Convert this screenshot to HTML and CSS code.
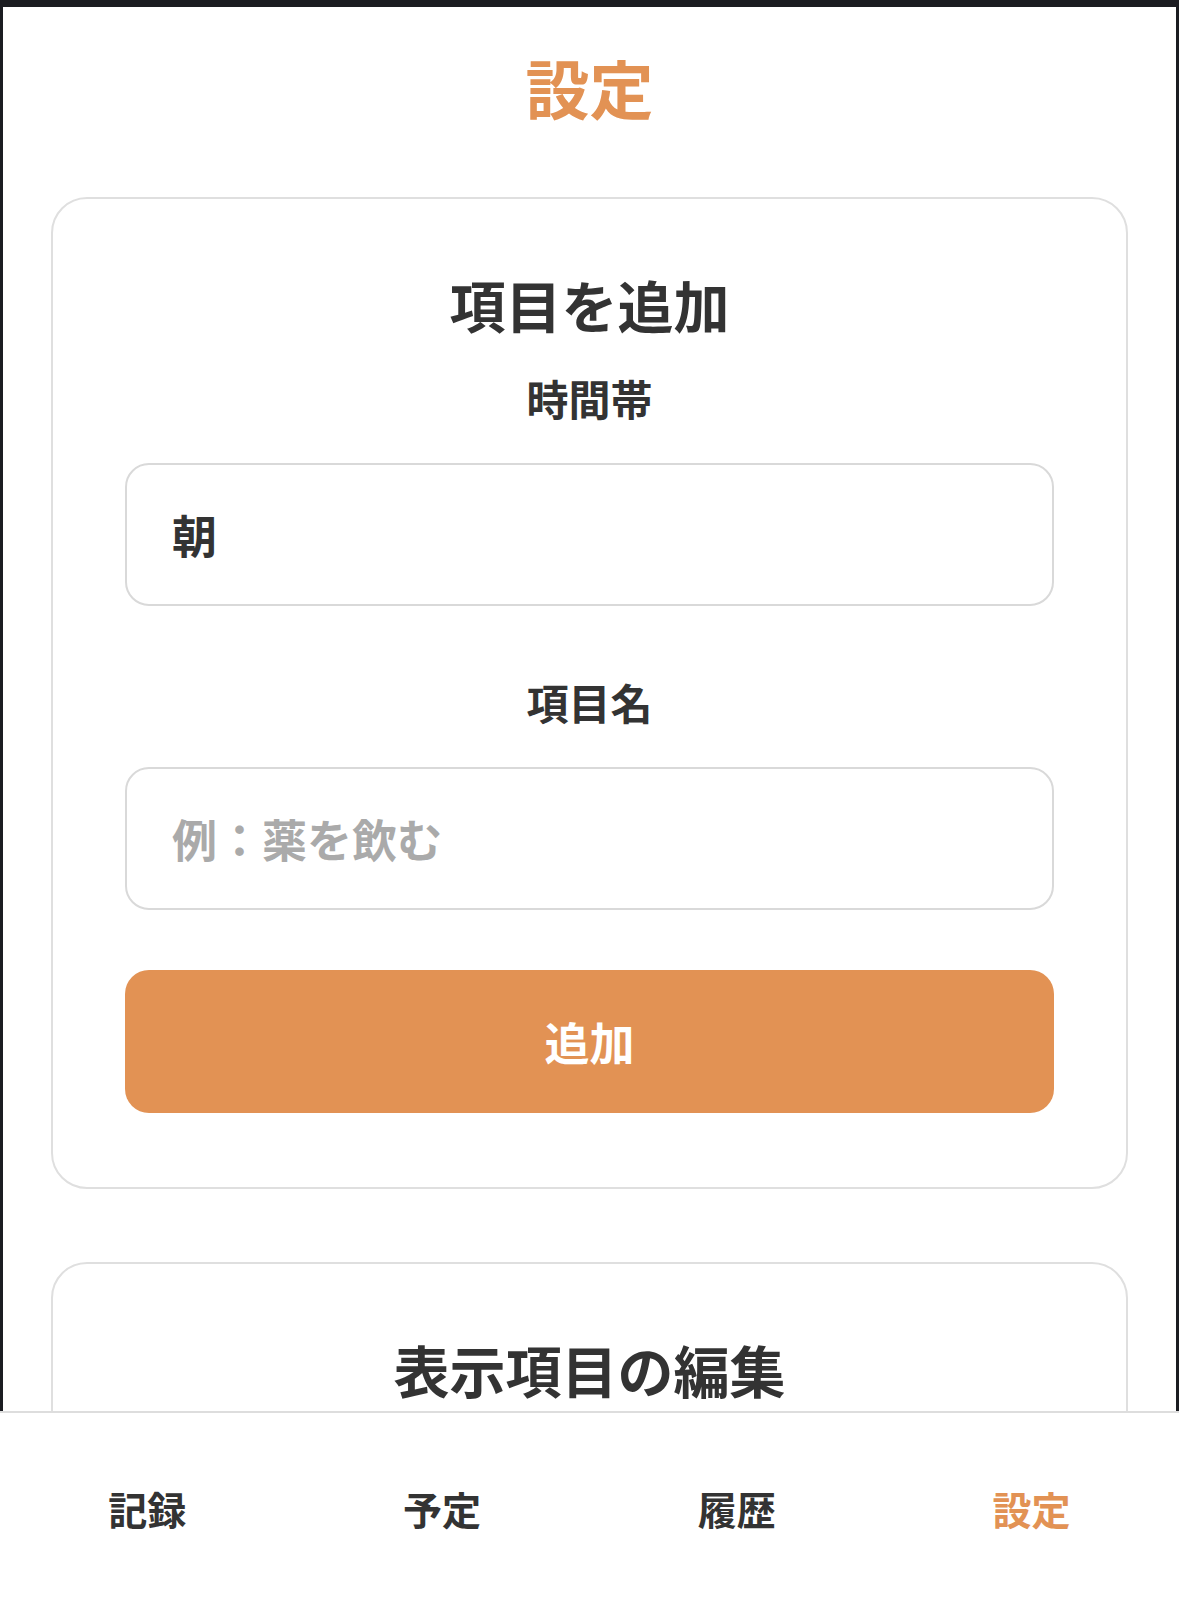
FILE: index.html
```html
<!DOCTYPE html>
<html lang="ja">
<head>
<meta charset="utf-8">
<title>設定</title>
<link rel="stylesheet" href="styles.css">
</head>
<body>
<div class="app">
  <h1 class="page-title">設定</h1>

  <section class="card">
    <h2 class="card-title">項目を追加</h2>
    <div class="field-group">
      <label class="field-label" for="slot">時間帯</label>
      <input class="field" id="slot" type="text" value="朝" readonly>
    </div>
    <div class="field-group">
      <label class="field-label" for="name">項目名</label>
      <input class="field" id="name" type="text" placeholder="例：薬を飲む">
    </div>
    <button class="add-button" type="button">追加</button>
  </section>

  <section class="card card-second">
    <h2 class="card-title">表示項目の編集</h2>
  </section>
</div>

<nav class="tabbar">
  <a class="tab">記録</a>
  <a class="tab">予定</a>
  <a class="tab">履歴</a>
  <a class="tab tab-active">設定</a>
</nav>
</body>
</html>
```

FILE: styles.css
```css
* {
  box-sizing: border-box;
}

html, body {
  margin: 0;
  padding: 0;
}

body {
  background: #1b1c21;
  font-family: "Noto Sans CJK JP", "Noto Sans", sans-serif;
  color: #333333;
  overflow: hidden;
  height: 100vh;
}

.app {
  margin: 7px 3px 0;
  background: #ffffff;
  height: calc(100vh - 7px);
  overflow: hidden;
  padding-top: 41px;
}

.page-title {
  margin: 0;
  text-align: center;
  font-size: 64px;
  line-height: 77px;
  font-weight: 700;
  color: #e29254;
}

.card {
  margin: 72px 48px 0;
  border: 2px solid #dfdfdf;
  border-radius: 36px;
  padding: 69px 72px 74px;
  background: #ffffff;
}

.card-second {
  margin-top: 73px;
  min-height: 300px;
}

.card-title {
  margin: 0 0 26px;
  text-align: center;
  font-size: 56px;
  line-height: 72px;
  font-weight: 700;
  color: #333333;
}

.field-group {
  display: flex;
  flex-direction: column;
  margin-bottom: 64px;
}

.field-group + .field-group {
  margin-bottom: 60px;
}

.field-label {
  display: block;
  text-align: center;
  font-size: 42px;
  line-height: 63px;
  font-weight: 700;
  margin-bottom: 34px;
  color: #333333;
}

.field {
  display: block;
  width: 100%;
  height: 143px;
  border: 2px solid #d9d9d9;
  border-radius: 24px;
  padding: 0 45px;
  font-family: inherit;
  font-size: 45px;
  font-weight: 700;
  color: #333333;
  background: #ffffff;
  outline: none;
}

.field::placeholder {
  color: #aaaaaa;
  font-weight: 700;
  opacity: 1;
}

.add-button {
  display: block;
  width: 100%;
  height: 143px;
  border: none;
  border-radius: 24px;
  background: #e29254;
  color: #ffffff;
  font-family: inherit;
  font-size: 45px;
  font-weight: 700;
  cursor: pointer;
}

.tabbar {
  position: fixed;
  left: 0;
  right: 0;
  bottom: 0;
  height: 195px;
  background: #ffffff;
  border-top: 2px solid #dddddd;
  display: grid;
  grid-template-columns: repeat(4, 1fr);
  padding-top: 66px;
}

.tab {
  text-align: center;
  font-size: 39px;
  line-height: 58px;
  font-weight: 700;
  color: #333333;
  text-decoration: none;
}

.tab-active {
  color: #e29254;
}
```
